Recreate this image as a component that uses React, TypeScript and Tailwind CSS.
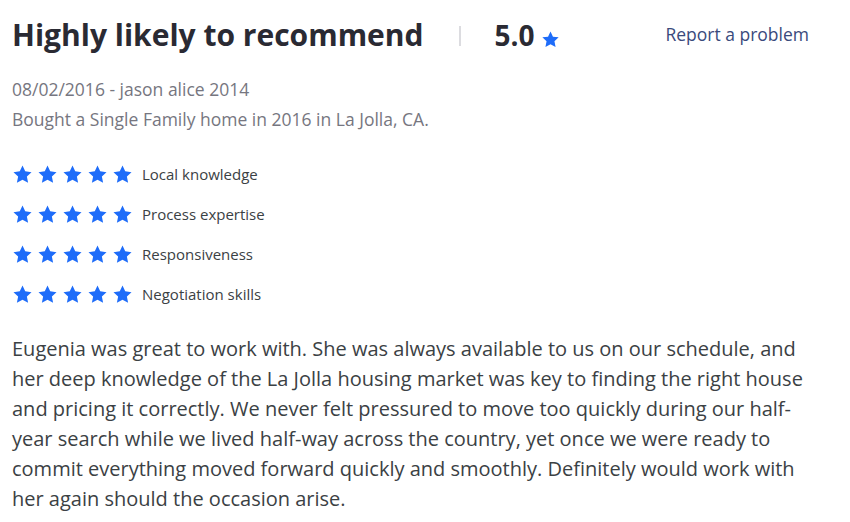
const ratings = ['Local knowledge', 'Process expertise', 'Responsiveness', 'Negotiation skills'];

function Star({ className }: { className: string }) {
    return (
        <svg viewBox="0 0 24 24" className={className} fill="#1e6cf9">
            <path d="M12 1.8l3.1 6.6 7.2.9-5.3 5 1.4 7.1L12 17.9l-6.4 3.5 1.4-7.1-5.3-5 7.2-.9z" />
        </svg>
    );
}

export default function App() {
    return (
        <div className="w-[850px] h-[522px] bg-white px-3 pt-[13px] font-['Open_Sans',sans-serif] overflow-hidden">
            {/* Header */}
            <div className="flex items-center h-[44px]">
                <h1 className="text-[30px] font-bold text-[#2a2a33] leading-none">Highly likely to recommend</h1>
                <div className="w-[2px] h-[20px] bg-[#dcdce0] ml-[35px] mt-[2px]"></div>
                <span className="ml-[34px] text-[28px] font-bold text-[#2a2a33] leading-none">5.0</span>
                <Star className="w-[19px] h-[19px] ml-[6px] mt-[8px]" />
                <a href="#" className="ml-auto mr-[29px] text-[17.5px] text-[#3a4a7c] leading-none">Report a problem</a>
            </div>

            {/* Meta */}
            <div className="mt-[17px] text-[17.5px] text-[#767680] leading-[30px]">
                <p>08/02/2016 - jason alice 2014</p>
                <p>Bought a Single Family home in 2016 in La Jolla, CA.</p>
            </div>

            {/* Sub ratings */}
            <div className="mt-[28px] flex flex-col gap-[16px]">
                {ratings.map((r) => (
                    <div key={r} className="flex items-center h-[24px]">
                        <div className="flex gap-[4px]">
                            {[0, 1, 2, 3, 4].map((i) => (
                                <Star key={i} className="w-[21px] h-[21px]" />
                            ))}
                        </div>
                        <span className="ml-[9px] text-[15px] text-[#3b4144]">{r}</span>
                    </div>
                ))}
            </div>

            {/* Body */}
            <p className="mt-[28px] w-[810px] text-[20px] leading-[30px] text-[#3b4144]">
                Eugenia was great to work with. She was always available to us on our schedule, and her deep knowledge of the La Jolla housing market was key to finding the right house and pricing it correctly. We never felt pressured to move too quickly during our half-year search while we lived half-way across the country, yet once we were ready to commit everything moved forward quickly and smoothly. Definitely would work with her again should the occasion arise.
            </p>
        </div>
    );
}
